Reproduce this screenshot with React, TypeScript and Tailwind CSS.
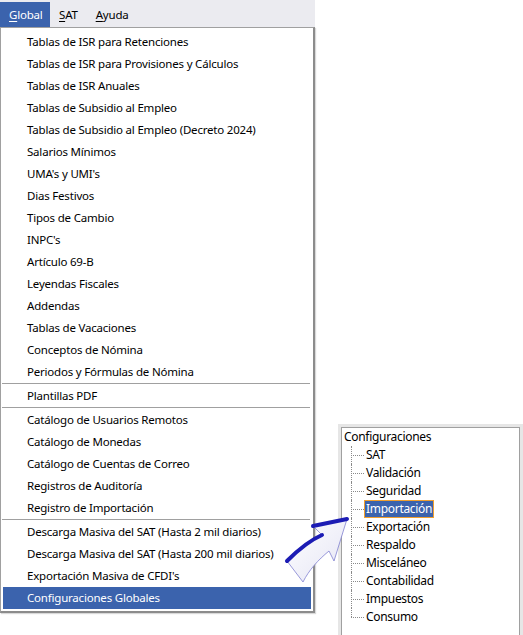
import React from "react";

type MenuEntry = { label: string; active?: boolean } | "sep";

const entries: MenuEntry[] = [
  { label: "Tablas de ISR para Retenciones" },
  { label: "Tablas de ISR para Provisiones y Cálculos" },
  { label: "Tablas de ISR Anuales" },
  { label: "Tablas de Subsidio al Empleo" },
  { label: "Tablas de Subsidio al Empleo (Decreto 2024)" },
  { label: "Salarios Mínimos" },
  { label: "UMA's y UMI's" },
  { label: "Dias Festivos" },
  { label: "Tipos de Cambio" },
  { label: "INPC's" },
  { label: "Artículo 69-B" },
  { label: "Leyendas Fiscales" },
  { label: "Addendas" },
  { label: "Tablas de Vacaciones" },
  { label: "Conceptos de Nómina" },
  { label: "Periodos y Fórmulas de Nómina" },
  "sep",
  { label: "Plantillas PDF" },
  "sep",
  { label: "Catálogo de Usuarios Remotos" },
  { label: "Catálogo de Monedas" },
  { label: "Catálogo de Cuentas de Correo" },
  { label: "Registros de Auditoría" },
  { label: "Registro de Importación" },
  "sep",
  { label: "Descarga Masiva del SAT (Hasta 2 mil diarios)" },
  { label: "Descarga Masiva del SAT (Hasta 200 mil diarios)" },
  { label: "Exportación Masiva de CFDI's" },
  { label: "Configuraciones Globales", active: true },
];

const treeItems = [
  "SAT",
  "Validación",
  "Seguridad",
  "Importación",
  "Exportación",
  "Respaldo",
  "Misceláneo",
  "Contabilidad",
  "Impuestos",
  "Consumo",
];

const MenuBar = () => (
  <div className="flex h-[27px] w-[315px] items-end bg-[#ebebf0]">
    <div className="flex h-[25px] w-[50px] items-center pl-[9px] text-white bg-[#3b63ad]">
      <span>
        <span className="underline underline-offset-2">G</span>lobal
      </span>
    </div>
    <div className="flex h-[25px] items-center pl-[9px]">
      <span className="underline underline-offset-2">S</span>AT
    </div>
    <div className="flex h-[25px] items-center pl-[18px]">
      <span className="underline underline-offset-2">A</span>yuda
    </div>
  </div>
);

const Dropdown = () => (
  <div className="w-[315px] border-l border-t border-r-2 border-b-2 border-l-[#a0a0a0] border-t-[#a0a0a0] border-r-[#8c8c8c] border-b-[#8c8c8c] bg-white pt-[3px] pb-[2px] shadow-[1px_1px_1px_rgba(0,0,0,0.15)]">
    {entries.map((entry, i) =>
      entry === "sep" ? (
        <div key={i} className="ml-[1px] mr-[3px] h-[2px] border-t border-[#a0a0a0]" />
      ) : (
        <div
          key={i}
          className={`mx-[2px] flex h-[22px] items-center pl-[24px] ${
            entry.active ? "bg-[#3b63ad] text-white" : "text-black"
          }`}
        >
          {entry.label}
        </div>
      )
    )}
  </div>
);

const TreePanel = () => (
  <div className="ml-[23px] mt-[424px] h-[220px] w-[185px] border-[3px] border-[#e6e6e6] bg-white">
    <div className="h-full border border-[#a0a0a0] pl-[2px] pt-0 text-[12px] tracking-[-0.3px]">
      <div className="flex h-[18px] items-center">Configuraciones</div>
      {treeItems.map((item, i) => {
        const last = i === treeItems.length - 1;
        const selected = item === "Importación";
        return (
          <div key={item} className="flex h-[18px] items-center">
            <div className="relative ml-[7px] h-full w-[13px]">
              <span
                className={`absolute left-0 top-0 border-l border-dotted border-[#8a8a8a] ${
                  last ? "h-1/2" : "h-full"
                }`}
              />
              <span className="absolute left-0 top-1/2 w-full border-t border-dotted border-[#8a8a8a]" />
            </div>
            <span
              className={`flex h-[18px] items-center border px-[1px] ${
                selected
                  ? "border-[#f0a030] bg-[#3b63ad] text-white"
                  : "border-transparent text-black"
              }`}
            >
              {item}
            </span>
          </div>
        );
      })}
    </div>
  </div>
);

const CurvedArrow = () => (
  <svg
    className="absolute left-[280px] top-[510px]"
    width="75"
    height="80"
    viewBox="280 510 75 80"
  >
    <defs>
      <linearGradient id="arrowFill" x1="0" y1="0" x2="1" y2="1">
        <stop offset="0" stopColor="#ffffff" />
        <stop offset="1" stopColor="#e4e4f4" />
      </linearGradient>
    </defs>
    <path
      d="M287 561 C297 551 308 541 322 535 L313 526 L347 519 L334 561 L329 551 C318 560 309 570 303 582 Z"
      fill="url(#arrowFill)"
      stroke="#8080d0"
      strokeWidth="0.8"
    />
    <path
      d="M287 561 C297 551 308 541 322 535"
      fill="none"
      stroke="#1c1cb4"
      strokeWidth="4"
      strokeLinecap="round"
    />
    <path
      d="M313 526 L347 519"
      fill="none"
      stroke="#1c1cb4"
      strokeWidth="4"
      strokeLinecap="round"
    />
  </svg>
);

export default function App() {
  return (
    <div
      className="relative h-[635px] w-[523px] overflow-hidden bg-white text-[11.5px] leading-none tracking-[-0.2px] text-black"
      style={{ fontFamily: '"Noto Sans", sans-serif' }}
    >
      <div className="flex">
        <div className="flex flex-col">
          <MenuBar />
          <Dropdown />
        </div>
        <TreePanel />
      </div>
      <CurvedArrow />
    </div>
  );
}
